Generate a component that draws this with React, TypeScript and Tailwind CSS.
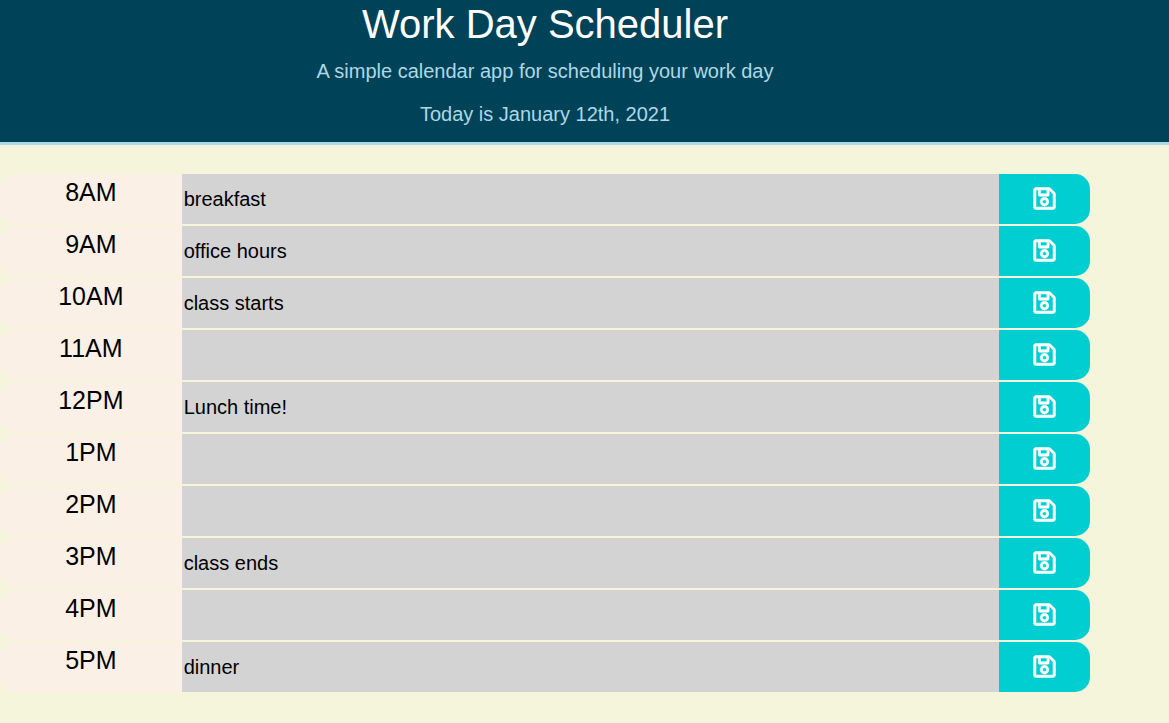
import { useState } from "react";
import { FaRegSave } from "react-icons/fa";

const initialSlots = [
  { hour: "8AM", task: "breakfast" },
  { hour: "9AM", task: "office hours" },
  { hour: "10AM", task: "class starts" },
  { hour: "11AM", task: "" },
  { hour: "12PM", task: "Lunch time!" },
  { hour: "1PM", task: "" },
  { hour: "2PM", task: "" },
  { hour: "3PM", task: "class ends" },
  { hour: "4PM", task: "" },
  { hour: "5PM", task: "dinner" },
];

function Header() {
  return (
    <header className="border-b-3 border-[#add8e6] bg-[#004358] pr-[79px] pb-3 text-center">
      <h1 className="text-[40px] leading-12 text-white">Work Day Scheduler</h1>
      <p className="mt-2 text-xl leading-[30px] text-[#add8e6]">
        A simple calendar app for scheduling your work day
      </p>
      <p className="mt-3 text-xl leading-8 text-[#add8e6]">Today is January 12th, 2021</p>
    </header>
  );
}

function TimeBlock({ hour, task }: { hour: string; task: string }) {
  const [text, setText] = useState(task);
  const id = `task-${hour}`;
  return (
    <div className="grid h-[50px] grid-cols-[2fr_9fr_1fr]">
      <label htmlFor={id} className="rounded-l-[15px] bg-[#faf0e6] text-center text-[25px] leading-9">
        {hour}
      </label>
      <input
        id={id}
        type="text"
        value={text}
        onChange={(e) => setText(e.target.value)}
        className="min-w-0 bg-[#d3d3d3] px-0.5 text-xl outline-none"
      />
      <button
        type="button"
        aria-label={`Save ${hour}`}
        className="flex items-center justify-center rounded-r-[15px] bg-[#00ced1] pb-0.5 text-white"
      >
        <FaRegSave className="size-[25px] stroke-current stroke-[12px]" />
      </button>
    </div>
  );
}

export default function App() {
  return (
    <div className="min-h-screen bg-[#f5f5dc] font-['Liberation_Sans',Arial,sans-serif] text-black">
      <Header />
      <main className="flex flex-col gap-0.5 pt-[29px] pr-[79px] pb-7">
        {initialSlots.map((slot) => (
          <TimeBlock key={slot.hour} {...slot} />
        ))}
      </main>
    </div>
  );
}
